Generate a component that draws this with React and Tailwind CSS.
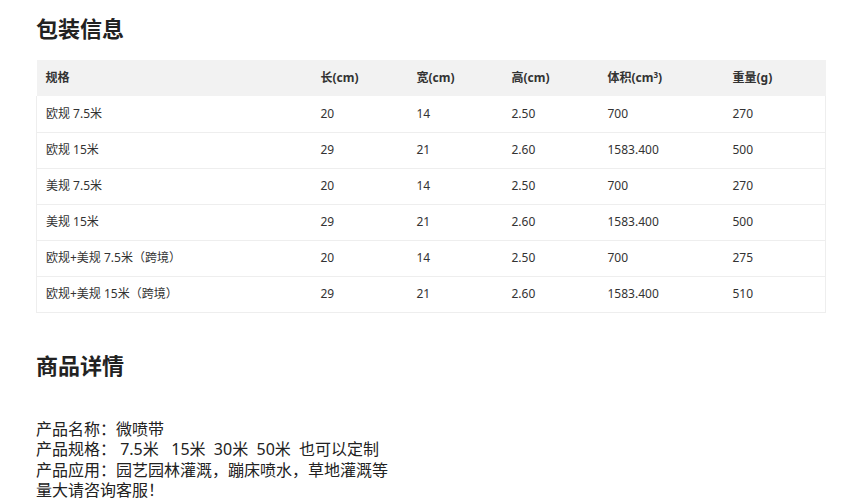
import React from 'react';

const rows = [
  ['欧规 7.5米', '20', '14', '2.50', '700', '270'],
  ['欧规 15米', '29', '21', '2.60', '1583.400', '500'],
  ['美规 7.5米', '20', '14', '2.50', '700', '270'],
  ['美规 15米', '29', '21', '2.60', '1583.400', '500'],
  ['欧规+美规 7.5米（跨境）', '20', '14', '2.50', '700', '275'],
  ['欧规+美规 15米（跨境）', '29', '21', '2.60', '1583.400', '510'],
];

const colWidths = ['w-[274px]', 'w-[96px]', 'w-[95px]', 'w-[96px]', 'w-[125px]', 'w-[103px]'];

const App = () => {
  return (
    <div
      className="bg-white text-[#333] pl-[36px] pt-[12px] min-h-screen"
      style={{ fontFamily: '"Noto Sans", "Noto Sans CJK SC", sans-serif' }}
    >
      {/* 包装信息 */}
      <h2 className="text-[22px] leading-[32px] font-bold text-[#222] mb-[16px]">包装信息</h2>

      <table className="w-[790px] border-collapse table-fixed text-[12px]">
        <thead>
          <tr className="bg-[#f2f2f2] h-[36px]">
            <th className={`${colWidths[0]} text-left font-bold pl-[9px]`}>规格</th>
            <th className={`${colWidths[1]} text-left font-bold pl-[10px]`}>长(cm)</th>
            <th className={`${colWidths[2]} text-left font-bold pl-[10px]`}>宽(cm)</th>
            <th className={`${colWidths[3]} text-left font-bold pl-[10px]`}>高(cm)</th>
            <th className={`${colWidths[4]} text-left font-bold pl-[10px]`}>
              体积(cm<sup className="text-[8px]">3</sup>)
            </th>
            <th className={`${colWidths[5]} text-left font-bold pl-[10px]`}>重量(g)</th>
          </tr>
        </thead>
        <tbody>
          {rows.map((r, i) => (
            <tr key={i} className="h-[36px] border-b border-x border-[#eeeeee]">
              {r.map((c, j) => (
                <td key={j} className={j === 0 ? 'pl-[9px]' : 'pl-[10px]'}>
                  {c}
                </td>
              ))}
            </tr>
          ))}
        </tbody>
      </table>

      {/* 商品详情 */}
      <h2 className="text-[22px] leading-[32px] font-bold text-[#222] mt-[36px]">商品详情</h2>

      <div className="mt-[38px] text-[16px] leading-[20.5px] text-[#222] whitespace-pre">
        <p>产品名称：微喷带</p>
        <p>产品规格： 7.5米   15米  30米  50米  也可以定制</p>
        <p>产品应用：园艺园林灌溉，蹦床喷水，草地灌溉等</p>
        <p>量大请咨询客服！</p>
      </div>
    </div>
  );
};

export default App;
